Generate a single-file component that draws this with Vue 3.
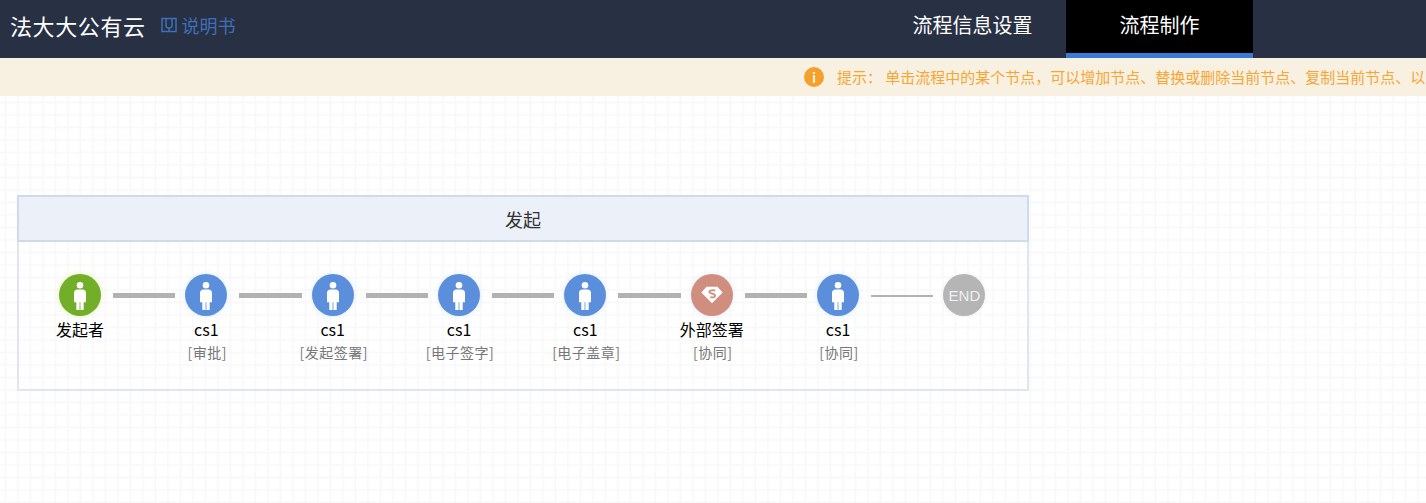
<template>
  <div class="page">
    <header class="topbar">
      <div class="brand">法大大公有云</div>
      <a class="manual">
        <svg class="book" viewBox="0 0 16 16" fill="none" stroke="#3f6fb8" stroke-width="1.5">
          <path d="M1 1.500h14v13H1z" />
          <path d="M5 1.500v7.200c0 1.700 1.300 2.300 3 2.300s3-.6 3-2.300V1.500" />
          <path d="M8 11v3.500" />
        </svg>
        说明书
      </a>
      <nav class="tabs">
        <div class="tab">流程信息设置</div>
        <div class="tab active">流程制作</div>
      </nav>
    </header>

    <div class="notice">
      <span class="notice-icon">i</span>
      <span class="notice-text">提示： 单击流程中的某个节点，可以增加节点、替换或删除当前节点、复制当前节点、以</span>
    </div>

    <main class="canvas">
      <section class="stage">
        <div class="stage-head">发起</div>
        <div class="flow">
          <template v-for="(node, i) in nodes" :key="i">
            <div class="node">
              <div class="circle" :class="node.type">
                <svg v-if="node.type === 'start' || node.type === 'user'" class="person" viewBox="0 0 12 28" fill="#fff">
                  <circle cx="6" cy="3.300" r="3.300" />
                  <path d="M3.400 7.400h5.200c1.900 0 3.400 1.500 3.400 3.400v9.400H9.700V28H6.400v-7.800h-.8V28H2.300v-7.800H0v-9.400c0-1.900 1.500-3.400 3.400-3.400z" />
                </svg>
                <svg v-else-if="node.type === 'sign'" class="gem" viewBox="0 0 32 26">
                  <path d="M8 1h16l7.500 8.500L16 25 .5 9.500z" fill="#fff" />
                  <path d="M20.500 6.500c-3-1-8.500-.6-8.500 1.800 0 3 8.500 2.600 8.500 5.700 0 2.500-3.500 3.300-7 1.900" fill="none" stroke="#d08e7f" stroke-width="2.600" />
                </svg>
                <span v-else class="end-text">END</span>
              </div>
              <div v-if="node.name" class="name">{{ node.name }}</div>
              <div v-if="node.role" class="role">[{{ node.role }}]</div>
            </div>
            <div v-if="i < nodes.length - 1" class="link" :class="{ thin: i === nodes.length - 2 }"></div>
          </template>
        </div>
      </section>
    </main>
  </div>
</template>

<script setup>
const nodes = [
  { type: 'start', name: '发起者' },
  { type: 'user', name: 'cs1', role: '审批' },
  { type: 'user', name: 'cs1', role: '发起签署' },
  { type: 'user', name: 'cs1', role: '电子签字' },
  { type: 'user', name: 'cs1', role: '电子盖章' },
  { type: 'sign', name: '外部签署', role: '协同' },
  { type: 'user', name: 'cs1', role: '协同' },
  { type: 'end' }
]
</script>

<style>
html, body {
  margin: 0;
  height: 100%;
  overflow: hidden;
}
</style>

<style scoped>
.page {
  width: 1426px;
  height: 503px;
  display: flex;
  flex-direction: column;
  overflow: hidden;
  font-family: "Noto Sans CJK SC", "Noto Sans", sans-serif;
}
.topbar {
  height: 58px;
  flex: none;
  display: flex;
  align-items: center;
  padding-left: 10px;
  background: #283044;
  color: #fff;
  box-sizing: border-box;
}
.brand {
  font-size: 22px;
  letter-spacing: 0.6px;
  margin-top: -8px;
}
.manual {
  margin-left: 15px;
  margin-top: -8px;
  display: flex;
  align-items: center;
  gap: 5px;
  font-size: 18px;
  color: #3f6fb8;
}
.book {
  width: 16px;
  height: 16px;
}
.tabs {
  display: flex;
  margin-left: auto;
  margin-right: 173px;
  height: 58px;
}
.tab {
  width: 187px;
  box-sizing: border-box;
  height: 58px;
  line-height: 49px;
  font-size: 20px;
  text-align: center;
  border-bottom: 5px solid transparent;
}
.tab.active {
  background: #000;
  border-bottom-color: #3a7bd5;
}
.notice {
  height: 38px;
  flex: none;
  display: flex;
  align-items: center;
  padding-left: 804px;
  background: #f8f1e1;
  overflow: hidden;
  white-space: nowrap;
  color: #f7a535;
  font-size: 15px;
}
.notice-icon {
  width: 20px;
  height: 20px;
  flex: none;
  margin-right: 13px;
  border-radius: 50%;
  background: #f6a02c;
  color: #fff;
  font-size: 14px;
  font-weight: 500;
  line-height: 20px;
  text-align: center;
}
.notice-text {
  margin-top: -2px;
}
.canvas {
  flex: 1;
  padding: 99px 0 0 17px;
  background-color: #fff;
  background-image:
    linear-gradient(to right, transparent 0, #f8f8f8 1.500px, transparent 3px),
    linear-gradient(to bottom, transparent 0, #f8f8f8 1.500px, transparent 3px);
  background-size: 12.5px 12.5px;
  background-position: 4px 5px;
}
.stage {
  width: 1012px;
  height: 196px;
  box-sizing: border-box;
  border: 2px solid #e0e6ef;
  border-top: none;
}
.stage-head {
  height: 47px;
  margin: 0 -2px;
  box-sizing: border-box;
  border: 2px solid #cfdbea;
  background: #ecf1f9;
  color: #333;
  font-size: 18px;
  line-height: 45px;
  text-align: center;
}
.flow {
  display: flex;
  align-items: flex-start;
  padding: 32px 0 0 29px;
}
.node {
  width: 64px;
  flex: none;
  display: flex;
  flex-direction: column;
  align-items: center;
}
.circle {
  width: 42px;
  height: 42px;
  border-radius: 50%;
  display: flex;
  align-items: center;
  justify-content: center;
}
.circle.start {
  background: #72ae28;
  box-shadow: 0 0 6px #e6f2c0;
}
.circle.user {
  background: #5b8fdc;
  box-shadow: 0 0 6px #dfeafb;
}
.circle.sign {
  background: #d08e7f;
  box-shadow: 0 0 6px #dfeafb;
}
.circle.end {
  background: #b5b5b5;
  box-shadow: 0 0 4px #eeeeee;
}
.person {
  width: 12px;
  height: 28px;
  margin-top: 1px;
}
.gem {
  width: 22px;
  height: 18px;
}
.end-text {
  font-family: "Liberation Sans", sans-serif;
  font-size: 15px;
  color: #f0f0f0;
}
.name {
  margin-top: 1px;
  font-size: 16px;
  line-height: 24px;
  color: #000;
  white-space: nowrap;
}
.role {
  padding-left: 2px;
  font-size: 14px;
  letter-spacing: 0.5px;
  line-height: 22px;
  color: #777;
  white-space: nowrap;
}
.link {
  width: 62.350px;
  height: 5px;
  flex: none;
  margin: 19px -1px 0 1px;
  background: #b2b2b2;
}
.link.thin {
  height: 2px;
  margin-top: 21px;
}
</style>
